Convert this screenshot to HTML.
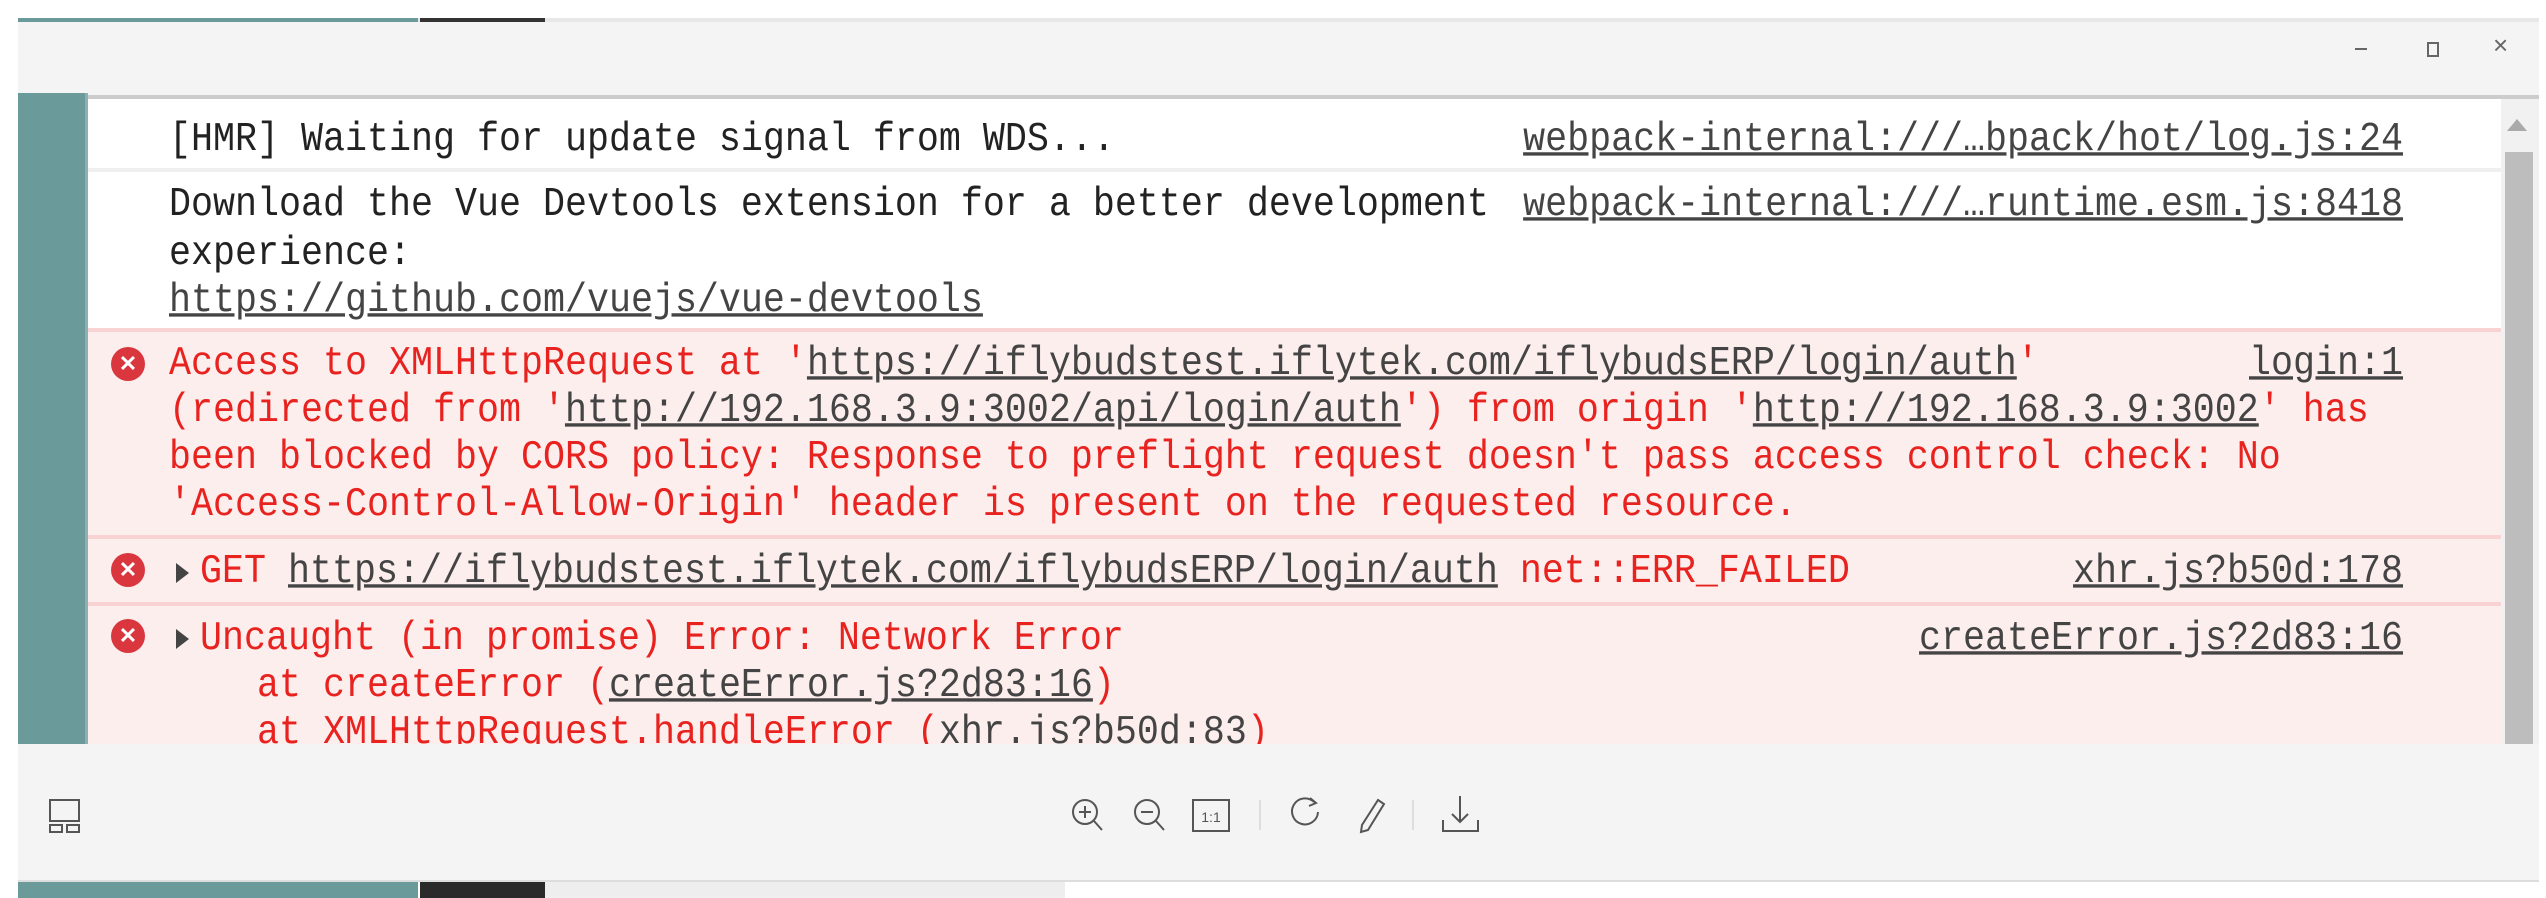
<!DOCTYPE html>
<html><head><meta charset="utf-8"><style>
*{margin:0;padding:0;box-sizing:border-box}
body{width:2546px;height:898px;overflow:hidden;background:#fff;position:relative;font-family:"Liberation Mono",monospace}
.abs{position:absolute}
.t{position:absolute;font-size:36.67px;line-height:47px;white-space:pre;color:#222;transform:scaleY(1.12);transform-origin:left center}
.r{color:#e8231f}
.u{text-decoration:underline;color:#444}
.src{position:absolute;right:143px;font-size:36.67px;line-height:47px;white-space:pre;color:#444;text-decoration:underline;transform:scaleY(1.12);transform-origin:right center}
.icon{position:absolute;width:34px;height:34px;border-radius:50%;background:#d9363e;color:#fff;font:bold 22px "Liberation Sans",sans-serif;text-align:center;line-height:34px}
.tri{position:absolute;width:0;height:0;border-top:10px solid transparent;border-bottom:10px solid transparent;border-left:13px solid #444}
</style></head><body>
<div class="abs" style="left:18px;top:18px;width:2521px;height:5px;background:#e8e8e8"></div>
<div class="abs" style="left:18px;top:18px;width:400px;height:5px;background:#6a9a9a"></div>
<div class="abs" style="left:420px;top:18px;width:125px;height:5px;background:#333"></div>
<div class="abs" style="left:18px;top:882px;width:400px;height:16px;background:#6a9a9a"></div>
<div class="abs" style="left:420px;top:882px;width:125px;height:16px;background:#2a2a2a"></div>
<div class="abs" style="left:545px;top:882px;width:520px;height:16px;background:#eee"></div>
<div class="abs" style="left:18px;top:22px;width:2521px;height:860px;background:#f4f4f4;border-bottom:2px solid #ddd"></div>
<div class="abs" style="left:2355px;top:48px;width:12px;height:2px;background:#666"></div>
<div class="abs" style="left:2427px;top:42px;width:12px;height:15px;border:2px solid #666"></div>
<div class="abs" style="left:2493px;top:30px;font:26px 'Liberation Sans',sans-serif;color:#666">×</div>
<div class="abs" style="left:88px;top:95px;width:2451px;height:4px;background:#ccc"></div>
<div class="abs" style="left:18px;top:93px;width:67px;height:651px;background:#6a9a9a"></div>
<div class="abs" style="left:85px;top:93px;width:3px;height:651px;background:#8db0b0"></div>
<div class="abs" style="left:88px;top:99px;width:2413px;height:645px;background:#fff"></div>
<div class="abs" style="left:88px;top:168px;width:2413px;height:4px;background:#efefef"></div>
<div class="abs" style="left:88px;top:328px;width:2413px;height:416px;background:#fdeeee"></div>
<div class="abs" style="left:88px;top:328px;width:2413px;height:4px;background:#f9d3d3"></div>
<div class="abs" style="left:88px;top:535px;width:2413px;height:4px;background:#f9d3d3"></div>
<div class="abs" style="left:88px;top:602px;width:2413px;height:4px;background:#f9d3d3"></div>
<div class="abs" style="left:2501px;top:99px;width:38px;height:645px;background:#f1f1f1"></div>
<div class="abs" style="left:2507px;top:119px;width:0;height:0;border-left:10px solid transparent;border-right:10px solid transparent;border-bottom:12px solid #aaa"></div>
<div class="abs" style="left:2505px;top:152px;width:28px;height:592px;background:#bdbdbd"></div>

<div class="t" style="left:169px;top:117px">[HMR] Waiting for update signal from WDS...</div>
<div class="src" style="top:117px">webpack-internal:///…bpack/hot/log.js:24</div>

<div class="t" style="left:169px;top:182px">Download the Vue Devtools extension for a better development</div>
<div class="src" style="top:182px">webpack-internal:///…runtime.esm.js:8418</div>
<div class="t" style="left:169px;top:231px">experience:</div>
<div class="t u" style="left:169px;top:278px">https://github.com/vuejs/vue-devtools</div>

<div class="icon" style="left:111px;top:347px">✕</div>
<div class="t r" style="left:169px;top:341px">Access to XMLHttpRequest at '<span class="u">https://iflybudstest.iflytek.com/iflybudsERP/login/auth</span>'</div>
<div class="src" style="top:341px">login:1</div>
<div class="t r" style="left:169px;top:388px">(redirected from '<span class="u">http://192.168.3.9:3002/api/login/auth</span>') from origin '<span class="u">http://192.168.3.9:3002</span>' has</div>
<div class="t r" style="left:169px;top:435px">been blocked by CORS policy: Response to preflight request doesn't pass access control check: No</div>
<div class="t r" style="left:169px;top:482px">'Access-Control-Allow-Origin' header is present on the requested resource.</div>

<div class="icon" style="left:111px;top:553px">✕</div>
<div class="tri" style="left:176px;top:563px"></div>
<div class="t r" style="left:200px;top:549px">GET <span class="u">https://iflybudstest.iflytek.com/iflybudsERP/login/auth</span> net::ERR_FAILED</div>
<div class="src" style="top:549px">xhr.js?b50d:178</div>

<div class="icon" style="left:111px;top:619px">✕</div>
<div class="tri" style="left:176px;top:629px"></div>
<div class="t r" style="left:200px;top:616px">Uncaught (in promise) Error: Network Error</div>
<div class="src" style="top:616px">createError.js?2d83:16</div>
<div class="abs" style="left:88px;top:663px;width:2413px;height:81px;overflow:hidden">
<div class="t r" style="left:81px;top:0px">    at createError (<span class="u">createError.js?2d83:16</span>)</div>
<div class="t r" style="left:81px;top:47px">    at XMLHttpRequest.handleError (<span class="u">xhr.js?b50d:83</span>)</div>
</div>

<svg class="abs" style="left:0;top:780px" width="2546" height="70" fill="none" stroke="#555" stroke-width="2">
<rect x="50" y="20" width="29" height="21"/><rect x="50" y="45" width="12" height="7"/><rect x="67" y="45" width="12" height="7"/>
<circle cx="1085" cy="32" r="12"/><line x1="1094" y1="41" x2="1102" y2="50"/><line x1="1079" y1="32" x2="1091" y2="32"/><line x1="1085" y1="26" x2="1085" y2="38"/>
<circle cx="1147" cy="32" r="12"/><line x1="1156" y1="41" x2="1164" y2="50"/><line x1="1141" y1="32" x2="1153" y2="32"/>
<rect x="1193" y="20" width="36" height="31"/><text x="1211" y="42" font-family="Liberation Sans" font-size="14" fill="#555" stroke="none" text-anchor="middle">1:1</text>
<line x1="1260" y1="20" x2="1260" y2="50" stroke="#ddd"/>
<path d="M1314 22 A13 13 0 1 0 1318 32"/><path d="M1310 18 L1316 23 L1309 26"/>
<path d="M1378 20 L1384 24 L1368 50 L1361 52 L1362 45 Z"/>
<line x1="1413" y1="20" x2="1413" y2="50" stroke="#ddd"/>
<line x1="1460" y1="16" x2="1460" y2="42"/><path d="M1452 34 L1460 42 L1468 34"/><path d="M1443 40 L1443 51 L1478 51 L1478 40"/>
</svg>
</body></html>
